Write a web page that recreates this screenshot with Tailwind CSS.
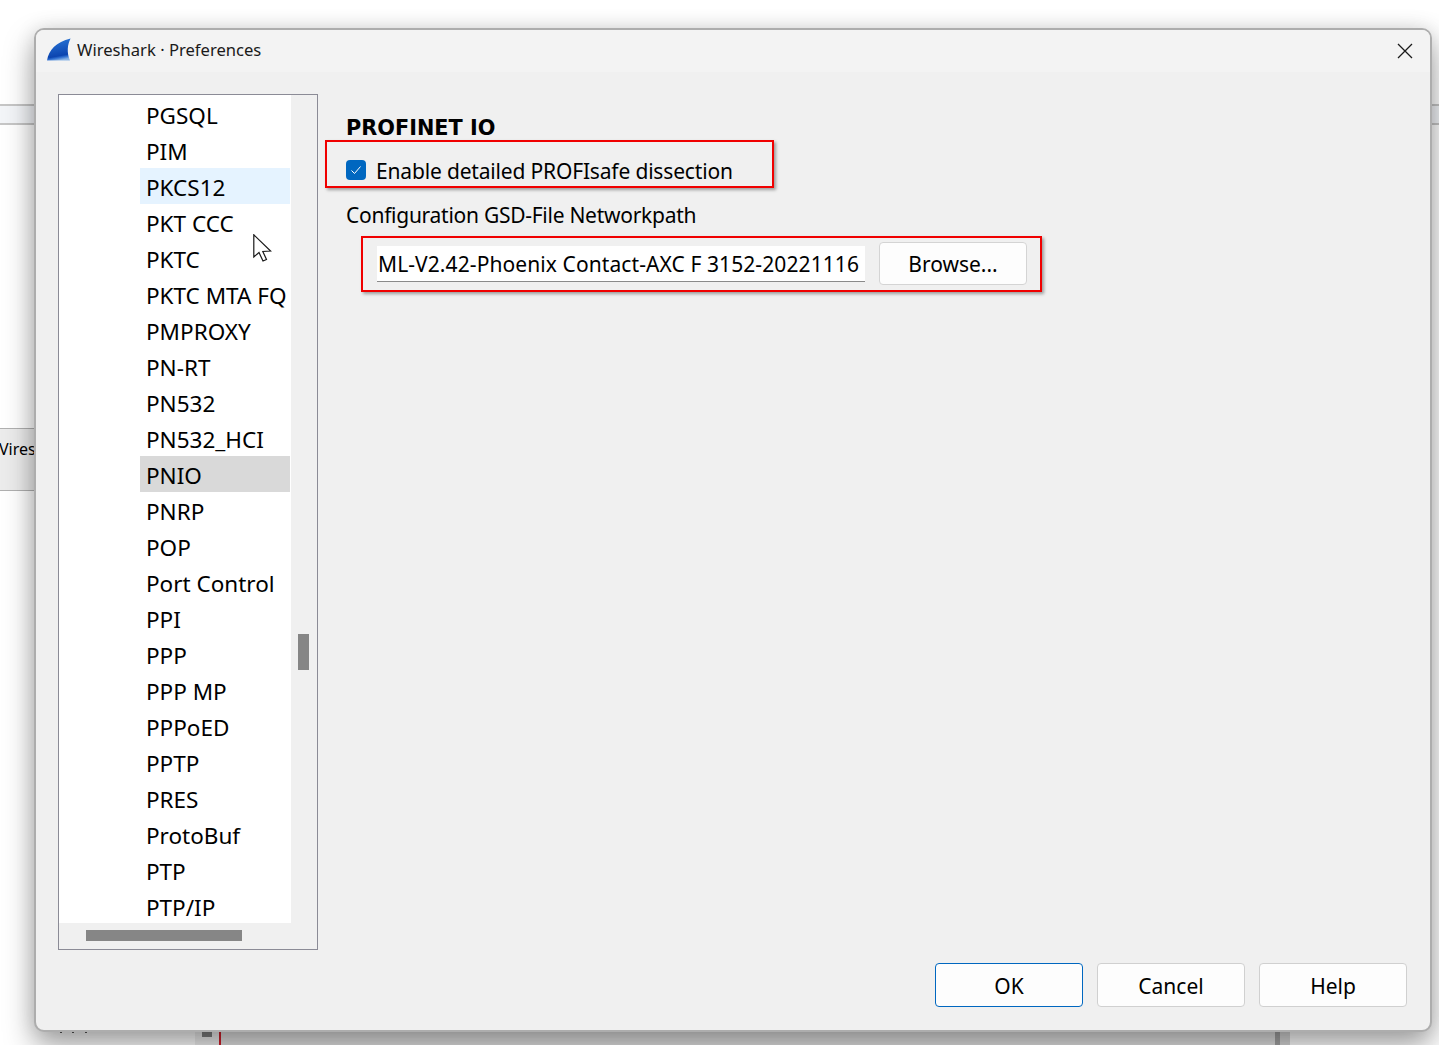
<!DOCTYPE html>
<html lang="en">
<head>
  <meta charset="UTF-8" />
  <title>Wireshark · Preferences</title>
  <script src="https://cdn.jsdelivr.net/npm/@tailwindcss/browser@4"></script>
</head>
<body class="bg-white overflow-hidden">
  <div class="relative w-[1439px] h-[1045px] overflow-hidden bg-white font-['Noto_Sans',sans-serif] text-black">

    <!-- window behind the dialog -->
    <div class="absolute left-0 top-[104px] w-full h-[21px] bg-[#f3f5f8] border-y-2 border-[#c6c6c6]"></div>
    <div class="absolute left-0 top-[428px] w-[34px] h-[63px] bg-[#ececec] border-y border-[#b0b0b0] text-[16px] leading-[40px] whitespace-nowrap overflow-hidden"><span class="block ml-[-1px]">Vires</span></div>
    <div class="absolute left-[195px] top-[1030px] w-[24px] h-[15px] bg-[#f0f0f0]"></div>
    <div class="absolute left-[219px] top-[1030px] w-[1056px] h-[15px] bg-[#e2e2e2]"></div>
    <div class="absolute left-[1275px] top-[1030px] w-[5px] h-[15px] bg-[#a4a4a4]"></div>
    <div class="absolute left-[1280px] top-[1030px] w-[10px] h-[15px] bg-[#d8d8d8]"></div>
    <div class="absolute left-[202px] top-[1030px] w-[10px] h-[7px] bg-[#808080]"></div>
    <div class="absolute left-[219px] top-[1030px] w-[2px] h-[15px] bg-[#d0202c]"></div>
    <div class="absolute left-[60px] top-[1030px] w-[2px] h-[3px] bg-[#555555]"></div>
    <div class="absolute left-[72px] top-[1030px] w-[2px] h-[3px] bg-[#555555]"></div>
    <div class="absolute left-[85px] top-[1030px] w-[2px] h-[3px] bg-[#555555]"></div>

    <!-- dialog -->
    <div class="absolute left-[34px] top-[28px] w-[1398px] h-[1004px] flex flex-col bg-[#f0f0f0] border-2 border-[#adadad] rounded-[10px] overflow-hidden shadow-[0_0_20px_rgba(0,0,0,0.1),0_14px_30px_rgba(0,0,0,0.36)]">
      <div class="h-[42px] shrink-0 flex items-center bg-[#f3f3f3] pl-[11px] pr-[17px]">
        <svg class="w-[24px] h-[24px] shrink-0 -mt-[3px]" viewBox="0 0 24 24">
          <defs>
            <linearGradient id="fin" x1="0.3" y1="0" x2="0.5" y2="1">
              <stop offset="0" stop-color="#2a76d6" />
              <stop offset="0.8" stop-color="#0c45b0" />
              <stop offset="0.88" stop-color="#2f6fd0" />
              <stop offset="1" stop-color="#8db6e6" />
            </linearGradient>
          </defs>
          <path d="M0 22.5 C2 12 9 4 23.6 0.6 C20.5 6 19.5 15 23 22.5 Z" fill="url(#fin)" />
        </svg>
        <span class="ml-[6px] mb-[3px] text-[16.6px] leading-[24px] text-[#1a1a1a]">Wireshark · Preferences</span>
        <svg class="ml-auto w-[16px] h-[16px]" viewBox="0 0 16 16" fill="none" stroke="#1a1a1a" stroke-width="1.3">
          <path d="M1 1 L15 15 M15 1 L1 15" />
        </svg>
      </div>

      <div class="flex-1 flex pt-[22px] pb-[23px] pl-[22px] pr-[23px]">
        <!-- protocol tree -->
        <div class="w-[260px] h-[856px] shrink-0 flex flex-col border border-[#8b8b96] bg-[#f0f0f0]">
          <div class="flex-1 flex min-h-0">
            <div class="w-[232px] bg-white overflow-hidden pt-[1px] text-[22.5px] leading-[40px]">
              <div class="ml-[81px] w-[150px] h-[36px] pl-[6px] whitespace-nowrap overflow-hidden">PGSQL</div>
              <div class="ml-[81px] w-[150px] h-[36px] pl-[6px] whitespace-nowrap overflow-hidden">PIM</div>
              <div class="ml-[81px] w-[150px] h-[36px] pl-[6px] whitespace-nowrap overflow-hidden bg-[#e5f3ff]">PKCS12</div>
              <div class="ml-[81px] w-[150px] h-[36px] pl-[6px] whitespace-nowrap overflow-hidden">PKT CCC</div>
              <div class="ml-[81px] w-[150px] h-[36px] pl-[6px] whitespace-nowrap overflow-hidden">PKTC</div>
              <div class="ml-[81px] w-[150px] h-[36px] pl-[6px] whitespace-nowrap overflow-hidden">PKTC MTA FQ</div>
              <div class="ml-[81px] w-[150px] h-[36px] pl-[6px] whitespace-nowrap overflow-hidden">PMPROXY</div>
              <div class="ml-[81px] w-[150px] h-[36px] pl-[6px] whitespace-nowrap overflow-hidden">PN-RT</div>
              <div class="ml-[81px] w-[150px] h-[36px] pl-[6px] whitespace-nowrap overflow-hidden">PN532</div>
              <div class="ml-[81px] w-[150px] h-[36px] pl-[6px] whitespace-nowrap overflow-hidden">PN532_HCI</div>
              <div class="ml-[81px] w-[150px] h-[36px] pl-[6px] whitespace-nowrap overflow-hidden bg-[#d9d9d9]">PNIO</div>
              <div class="ml-[81px] w-[150px] h-[36px] pl-[6px] whitespace-nowrap overflow-hidden">PNRP</div>
              <div class="ml-[81px] w-[150px] h-[36px] pl-[6px] whitespace-nowrap overflow-hidden">POP</div>
              <div class="ml-[81px] w-[150px] h-[36px] pl-[6px] whitespace-nowrap overflow-hidden">Port Control</div>
              <div class="ml-[81px] w-[150px] h-[36px] pl-[6px] whitespace-nowrap overflow-hidden">PPI</div>
              <div class="ml-[81px] w-[150px] h-[36px] pl-[6px] whitespace-nowrap overflow-hidden">PPP</div>
              <div class="ml-[81px] w-[150px] h-[36px] pl-[6px] whitespace-nowrap overflow-hidden">PPP MP</div>
              <div class="ml-[81px] w-[150px] h-[36px] pl-[6px] whitespace-nowrap overflow-hidden">PPPoED</div>
              <div class="ml-[81px] w-[150px] h-[36px] pl-[6px] whitespace-nowrap overflow-hidden">PPTP</div>
              <div class="ml-[81px] w-[150px] h-[36px] pl-[6px] whitespace-nowrap overflow-hidden">PRES</div>
              <div class="ml-[81px] w-[150px] h-[36px] pl-[6px] whitespace-nowrap overflow-hidden">ProtoBuf</div>
              <div class="ml-[81px] w-[150px] h-[36px] pl-[6px] whitespace-nowrap overflow-hidden">PTP</div>
              <div class="ml-[81px] w-[150px] h-[36px] pl-[6px] whitespace-nowrap overflow-hidden">PTP/IP</div>
            </div>
            <!-- vertical scrollbar -->
            <div class="flex-1 pt-[539px] pl-[7px]">
              <div class="w-[11px] h-[36px] bg-[#868686]"></div>
            </div>
          </div>
          <!-- horizontal scrollbar -->
          <div class="h-[26px] shrink-0 pt-[7px] pl-[27px]">
            <div class="w-[156px] h-[11px] bg-[#868686]"></div>
          </div>
        </div>

        <!-- PNIO page -->
        <div class="flex-1 flex flex-col pl-[28px]">
          <h1 class="mt-[22px] text-[20.8px] leading-[24px] font-bold font-['DejaVu_Sans',sans-serif]">PROFINET IO</h1>
          <div class="mt-[18px] h-[24px] flex items-center text-[21px] leading-[24px]">
            <span class="w-[20px] h-[20px] rounded-[4px] bg-[#0067c0] flex items-center justify-center">
              <svg class="w-[12px] h-[12px]" viewBox="0 0 12 12" fill="none" stroke="#ffffff" stroke-width="1">
                <path d="M1.5 6.5 L4.5 9.5 L10.5 2.5" />
              </svg>
            </span>
            <span class="ml-[10px] translate-y-[1px] tracking-[-0.17px]">Enable detailed PROFIsafe dissection</span>
          </div>
          <div class="mt-[20px] translate-y-[1px] text-[21px] leading-[24px] tracking-[-0.27px]">Configuration GSD-File Networkpath</div>
          <div class="mt-[16px] ml-[31px] flex items-center">
            <div class="w-[488px] h-[36px] bg-white border-b border-[#8a8a8a] pl-[1px] text-[21px] leading-[36px] tracking-[0.09px] whitespace-nowrap">ML-V2.42-Phoenix Contact-AXC F 3152-20221116</div>
            <button class="ml-[14px] w-[148px] h-[43px] pt-[2px] bg-[#fdfdfd] border border-[#d4d4d4] rounded-[4px] text-[21px]">Browse...</button>
          </div>
          <div class="mt-auto flex justify-end gap-[14px] text-[21px]">
            <button class="w-[148px] h-[44px] pt-[3px] bg-[#fdfdfd] border border-[#0067c0] rounded-[4px]">OK</button>
            <button class="w-[148px] h-[44px] pt-[3px] bg-[#fdfdfd] border border-[#d0d0d0] rounded-[4px]">Cancel</button>
            <button class="w-[148px] h-[44px] pt-[3px] bg-[#fdfdfd] border border-[#d0d0d0] rounded-[4px]">Help</button>
          </div>
        </div>
      </div>
    </div>

    <!-- red annotation boxes -->
    <div class="absolute left-[325px] top-[140px] w-[449px] h-[48px] border-2 border-[#f00000] shadow-[2px_2px_3px_rgba(0,0,0,0.35)]"></div>
    <div class="absolute left-[361px] top-[236px] w-[681px] h-[56px] border-2 border-[#f00000] shadow-[2px_2px_3px_rgba(0,0,0,0.35)]"></div>

    <!-- mouse cursor -->
    <svg class="absolute left-[253px] top-[234px] w-[19px] h-[28px]" viewBox="0 0 19 28" fill="#ffffff" stroke="#1a1a1a" stroke-width="1.2">
      <path d="M0.8 0.8 L0.8 23 L6 18.5 L10 27 L13.5 25.5 L9.8 17.5 L17.6 17 Z" />
    </svg>
  </div>
</body>
</html>
